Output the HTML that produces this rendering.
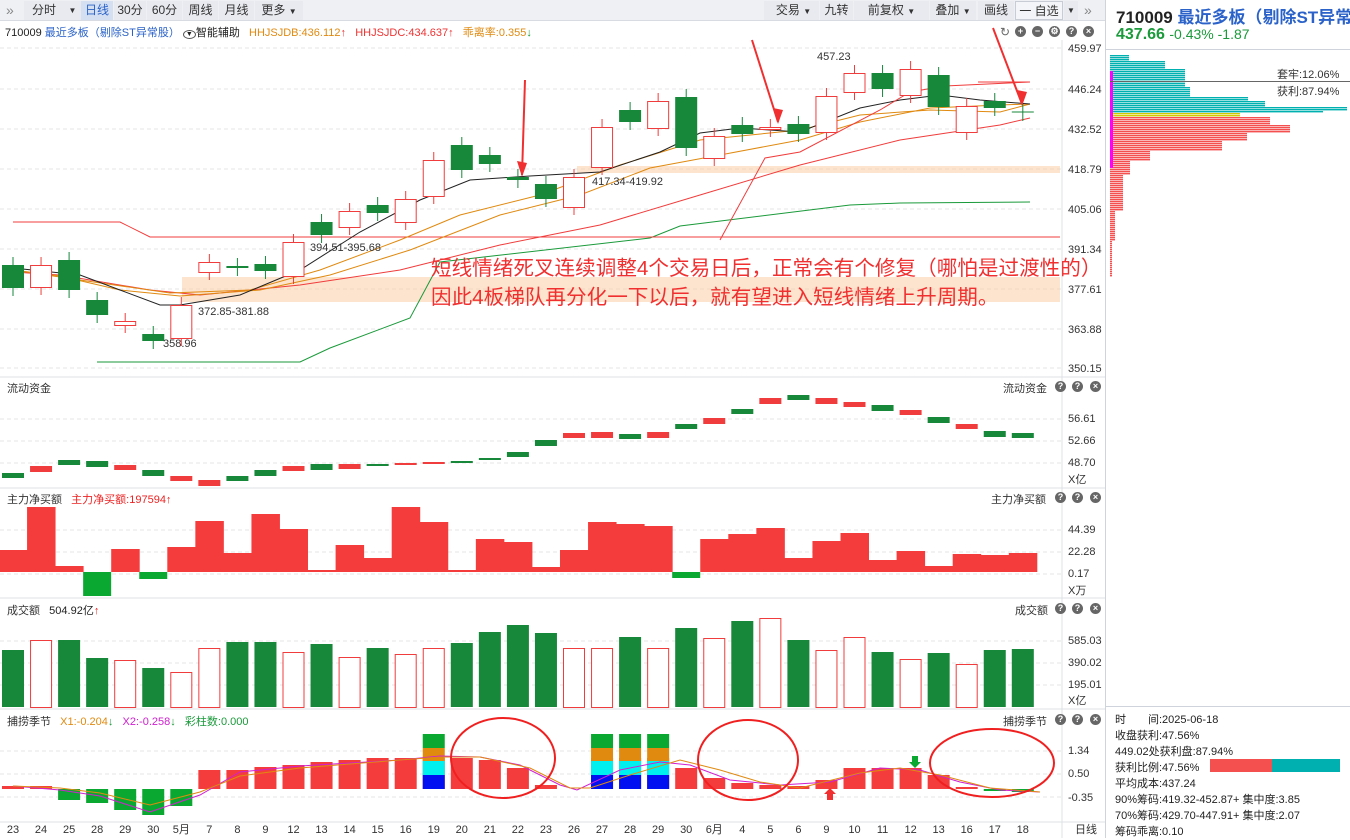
<!DOCTYPE html>
<html><head><meta charset="utf-8">
<style>
*{margin:0;padding:0;box-sizing:border-box}
body{width:1350px;height:838px;overflow:hidden;background:#fff;font-family:"Liberation Sans","Noto Sans CJK SC",sans-serif;font-size:12px;color:#333;position:relative}
.a{position:absolute;white-space:nowrap}
.tb{position:absolute;top:0;height:21px;background:#eef0f4;border-bottom:1px solid #d8dbe2}
.btn{position:absolute;top:1px;height:19px;line-height:19px;font-size:12px;color:#333;text-align:center;background:#e8eaef}
.ax{font-size:11px;color:#333}
.ic{position:absolute;width:11px;height:11px;border-radius:50%;background:#666;color:#fff;font-size:9px;line-height:11px;text-align:center;font-weight:bold}
.dt{position:absolute;width:30px;text-align:center;top:824px;font-size:11px;line-height:13px;height:13px;white-space:nowrap}
</style></head><body>
<div class="tb" style="left:0;width:1105px"></div>
<div class="a" style="left:6px;top:2px;color:#888;font-size:14px">»</div>
<div class="btn" style="left:24px;width:40px">分时</div>
<div class="btn" style="left:64px;width:17px;font-size:8px">▼</div>
<div class="btn" style="left:81px;width:32px;background:#d4e0f2;color:#2a62c9">日线</div>
<div class="btn" style="left:114px;width:32px">30分</div>
<div class="btn" style="left:147px;width:35px">60分</div>
<div class="btn" style="left:183px;width:35px">周线</div>
<div class="btn" style="left:219px;width:35px">月线</div>
<div class="btn" style="left:255px;width:48px">更多 <span style="font-size:8px">▼</span></div>
<div class="btn" style="left:764px;width:55px;padding-left:4px">交易 <span style="font-size:8px">▼</span></div>
<div class="btn" style="left:820px;width:33px">九转</div>
<div class="btn" style="left:854px;width:75px">前复权 <span style="font-size:8px">▼</span></div>
<div class="btn" style="left:930px;width:46px">叠加 <span style="font-size:8px">▼</span></div>
<div class="btn" style="left:978px;width:36px">画线</div>
<div class="btn" style="left:1015px;width:48px;background:#f4f5f8;border:1px solid #c8ccd4">一 自选</div>
<div class="btn" style="left:1064px;width:14px;font-size:8px">▼</div>
<div class="a" style="left:1084px;top:2px;color:#888;font-size:14px">»</div>

<div class="a" style="left:5px;top:24px;font-size:11px;color:#222">710009 <span style="color:#2a62c9">最近多板（剔除ST异常股）</span> <span style="border:1px solid #555;border-radius:50%;font-size:7px;padding:0 2px">▼</span>智能辅助 &nbsp; <span style="color:#e08a10">HHJSJDB:436.112<span style="color:#e33">↑</span></span> &nbsp; <span style="color:#e33">HHJSJDC:434.637↑</span> &nbsp; <span style="color:#e08a10">乖离率:0.355<span style="color:#1a9a3a">↓</span></span></div>
<div class="a" style="left:1000px;top:25px;color:#666;font-size:12px">↻</div>
<div class="ic" style="left:1015px;top:26px">+</div><div class="ic" style="left:1032px;top:26px">−</div><div class="ic" style="left:1049px;top:26px">⚙</div><div class="ic" style="left:1066px;top:26px">?</div><div class="ic" style="left:1083px;top:26px">×</div>

<svg class="a" style="left:0;top:0" width="1105" height="838" id="sv"></svg>

<div class="a ax" style="left:1068px;top:43px">459.97</div>
<div class="a ax" style="left:1068px;top:84px">446.24</div>
<div class="a ax" style="left:1068px;top:124px">432.52</div>
<div class="a ax" style="left:1068px;top:164px">418.79</div>
<div class="a ax" style="left:1068px;top:204px">405.06</div>
<div class="a ax" style="left:1068px;top:244px">391.34</div>
<div class="a ax" style="left:1068px;top:284px">377.61</div>
<div class="a ax" style="left:1068px;top:324px">363.88</div>
<div class="a ax" style="left:1068px;top:363px">350.15</div>
<div class="a ax" style="left:817px;top:51px">457.23</div>
<div class="a ax" style="left:592px;top:176px">417.34-419.92</div>
<div class="a ax" style="left:310px;top:242px">394.51-395.68</div>
<div class="a ax" style="left:198px;top:306px">372.85-381.88</div>
<div class="a ax" style="left:163px;top:338px">358.96</div>
<div class="a" style="left:431px;top:256px;font-size:20.6px;line-height:26px;color:#f03030">短线情绪死叉连续调整4个交易日后，正常会有个修复（哪怕是过渡性的）</div>
<div class="a" style="left:431px;top:285px;font-size:20.6px;line-height:26px;color:#f03030">因此4板梯队再分化一下以后，就有望进入短线情绪上升周期。</div>

<div class="a" style="left:7px;top:380px;font-size:11px">流动资金</div>
<div class="a" style="left:1003px;top:380px;font-size:11px">流动资金</div>
<div class="a ax" style="left:1068px;top:413px">56.61</div>
<div class="a ax" style="left:1068px;top:435px">52.66</div>
<div class="a ax" style="left:1068px;top:457px">48.70</div>
<div class="a ax" style="left:1068px;top:471px">X亿</div>
<div class="a" style="left:7px;top:491px;font-size:11px">主力净买额 &nbsp; <span style="color:#e22">主力净买额:197594↑</span></div>
<div class="a" style="left:991px;top:491px;font-size:11px">主力净买额</div>
<div class="a ax" style="left:1068px;top:524px">44.39</div>
<div class="a ax" style="left:1068px;top:546px">22.28</div>
<div class="a ax" style="left:1068px;top:568px">0.17</div>
<div class="a ax" style="left:1068px;top:582px">X万</div>
<div class="a" style="left:7px;top:602px;font-size:11px">成交额 &nbsp; <span style="color:#222">504.92亿</span><span style="color:#e22">↑</span></div>
<div class="a" style="left:1015px;top:602px;font-size:11px">成交额</div>
<div class="a ax" style="left:1068px;top:635px">585.03</div>
<div class="a ax" style="left:1068px;top:657px">390.02</div>
<div class="a ax" style="left:1068px;top:679px">195.01</div>
<div class="a ax" style="left:1068px;top:692px">X亿</div>
<div class="a" style="left:7px;top:713px;font-size:11px">捕捞季节 &nbsp; <span style="color:#e08a10">X1:-0.204</span><span style="color:#1a9a3a">↓</span> &nbsp; <span style="color:#d020d0">X2:-0.258</span><span style="color:#1a9a3a">↓</span> &nbsp; <span style="color:#1a9a3a">彩柱数:0.000</span></div>
<div class="a" style="left:1003px;top:713px;font-size:11px">捕捞季节</div>
<div class="a ax" style="left:1068px;top:745px">1.34</div>
<div class="a ax" style="left:1068px;top:768px">0.50</div>
<div class="a ax" style="left:1068px;top:792px">-0.35</div>
<div class="a" style="left:1075px;top:824px;font-size:11px;line-height:13px">日线</div>
<div id="dates"></div>
<div id="ics"></div>

<div class="a" style="left:1105px;top:0;width:1px;height:838px;background:#cfd3dc"></div>
<div class="a" style="left:1116px;top:3px;font-size:17px;font-weight:bold;color:#222">710009 <span style="color:#2a62c9">最近多板（剔除ST异常</span></div>
<div class="a" style="left:1116px;top:26px;font-size:16px;font-weight:bold;color:#1a9a3a">437.66 <span style="font-size:14px;font-weight:normal">-0.43% -1.87</span></div>
<div class="a" style="left:1106px;top:49px;width:244px;height:1px;background:#cfd3dc"></div>
<svg class="a" style="left:1106px;top:50px" width="244" height="240" id="chips"></svg>
<div class="a" style="left:1110px;top:81px;width:240px;height:1px;background:#666"></div>
<div class="a" style="left:1277px;top:66px;font-size:11px">套牢:12.06%</div>
<div class="a" style="left:1277px;top:83px;font-size:11px">获利:87.94%</div>
<div class="a" style="left:1106px;top:706px;width:244px;height:1px;background:#cfd3dc"></div>
<div class="a" style="left:1115px;top:712px;font-size:11px;line-height:16px;color:#222">时　　间:2025-06-18<br>收盘获利:47.56%<br>449.02处获利盘:87.94%<br>获利比例:47.56%<br>平均成本:437.24<br>90%筹码:419.32-452.87+ 集中度:3.85<br>70%筹码:429.70-447.91+ 集中度:2.07<br>筹码乖离:0.10</div>
<div class="a" style="left:1210px;top:759px;width:62px;height:13px;background:#f55050"></div>
<div class="a" style="left:1272px;top:759px;width:68px;height:13px;background:#00b0b0"></div>

<script>
var R='#f03c3c',G='#17873a',s='';
function X(i){return 13+i*28.05}
function r(x,y,w,h,f,st){s+='<rect x="'+x+'" y="'+y+'" width="'+w+'" height="'+h+'" fill="'+f+'"'+(st?' stroke="'+st+'"':'')+'/>'}
function l(x1,y1,x2,y2,c,w){s+='<line x1="'+x1+'" y1="'+y1+'" x2="'+x2+'" y2="'+y2+'" stroke="'+c+'" stroke-width="'+(w||1)+'"/>'}
function pl(p,c,w){s+='<polyline points="'+p+'" fill="none" stroke="'+c+'" stroke-width="'+(w||1)+'"/>'}
[377,488,598,709,822].forEach(function(y){l(0,y,1105,y,'#dde0e6')});
l(1062,40,1062,838,'#dde0e6');
[48,89,129,169,209,249,289,329,368,419,441,463,530,552,574,641,663,685,751,774,797].forEach(function(y){s+='<line x1="0" y1="'+y+'" x2="1062" y2="'+y+'" stroke="#e4e4e4" stroke-dasharray="4,3"/>'});
r(182,277,878,25,'rgba(252,205,165,0.55)');r(577,166,483,7,'rgba(252,205,165,0.55)');
var c=[[0,265,288],[1,265,287],[0,260,290],[0,300,315],[1,321,325],[0,334,341],[1,305,338],[1,262,272],[0,266,268],[0,264,271],[1,242,276],[0,222,235],[1,211,227],[0,205,213],[1,199,222],[1,160,196],[0,145,170],[0,155,164],[0,177,180],[0,184,199],[1,177,207],[1,127,167],[0,110,122],[1,101,128],[0,97,148],[1,136,158],[0,125,134],[1,127,129],[0,124,134],[1,96,132],[1,73,92],[0,73,89],[1,69,95],[0,75,107],[1,106,132],[0,101,108],[0,112,113]];
pl('97,362 125,362 300,362 330,348 410,318 440,262 650,238 680,226 850,205 900,203 1030,202','#1a9a3a');
pl('13,222 120,222 150,237 1060,237','#f03c3c');
pl('13,272 60,275 150,290 200,295 300,285 400,270 500,245 600,225 700,195 800,165 900,140 1000,125 1030,118','#f03c3c');
pl('13,270 60,276 120,290 180,296 260,290 330,275 410,250 500,215 580,195 650,168 720,155 800,140 860,122 930,108 1000,105 1030,104','#e08a10');
pl('13,270 80,280 170,293 250,290 320,270 400,240 460,215 540,195 620,165 700,140 800,130 860,115 930,110 1000,112 1030,104','#e08a10');
pl('13,268 80,275 120,290 160,305 180,305 240,295 300,270 360,232 420,200 470,180 530,176 600,172 660,152 700,133 740,128 800,132 860,108 900,100 940,95 980,100 1030,104','#222');
pl('720,240 765,158 800,152 880,110 910,92 945,86 1030,82','#f03c3c');
l(978,82,1030,82,'#f03c3c');
c.forEach(function(d,i){var x=X(i);var col=d[0]?R:G;l(x,d[1]-8,x,d[2]+8,col);if(d[2]-d[1]<2){l(x-11,d[1],x+11,d[1],col)}else if(d[0]){r(x-10.5,d[1]+.5,21,d[2]-d[1],'#fff',R)}else r(x-11,d[1],22,d[2]-d[1],G)});
[[525,80,522,175],[752,40,778,122],[993,28,1022,104]].forEach(function(a){l(a[0],a[1],a[2],a[3],'#f03030',2);s+='<polygon points="'+(a[2]-5)+','+(a[3]-14)+' '+(a[2]+5)+','+(a[3]-12)+' '+a[2]+','+(a[3]+2)+'" fill="#f03030"/>'});
var fl=[473,466,460,461,465,470,476,480,476,470,466,464,464,464,463,462,461,458,452,440,433,432,434,432,424,418,409,398,395,398,402,405,410,417,424,431,433];
fl.forEach(function(y,i){var x=X(i);r(x-11,y,22,i>=13&&i<=17?2:(i%2?6:5),c[i][0]?R:G)});
var mn=[550,507,566,-596,549,-579,547,521,553,514,529,570,545,558,507,522,570,539,542,567,550,522,524,526,-578,539,534,528,558,541,533,560,551,566,554,555,553];
mn.forEach(function(v,i){var x=X(i)-14;if(v<0)r(x,572,28,-v-572,'#0aa830');else r(x,v,28.5,572-v,'#f53c3c')});
var vo=[650,640,640,658,660,668,672,648,642,642,652,644,657,648,654,648,643,632,625,633,648,648,637,648,628,638,621,618,640,650,637,652,659,653,664,650,649];
vo.forEach(function(y,i){var x=X(i);if(c[i][0])r(x-10.5,y+.5,21,707-y,'#fff',R);else r(x-11,y,22,707-y,G)});
var bl=[786,786,800,803,810,815,806,770,770,767,765,762,760,758,758,758,758,760,768,785,789,758,758,758,768,778,783,785,786,780,768,768,768,775,787,791,792];
bl.forEach(function(y,i){var x=X(i);if(i>=2&&i<=6||i>=35)r(x-11,789,22,y-789,'#0aa830');else if(y<789)r(x-11,y,22,789-y,'#f53c3c')});
[15,21,22,23].forEach(function(i){var x=X(i)-11;r(x,775,22,14,'#0010f0');r(x,761,22,14,'#00f0f0');r(x,748,22,13,'#e08a10');r(x,734,22,14,'#0aa830')});
pl('13,786 60,790 100,796 150,812 200,795 240,772 300,766 400,760 440,756 480,757 520,765 560,785 577,790 620,770 660,762 690,765 730,780 780,785 830,782 880,768 920,770 960,782 1000,790 1040,792','#d020d0');
pl('13,786 60,788 100,793 150,805 200,792 240,776 300,768 400,760 440,757 480,757 530,768 570,788 590,788 630,775 680,760 720,770 760,782 800,788 860,773 900,768 940,775 990,788 1040,792','#e08a10');
s+='<ellipse cx="503" cy="758" rx="52" ry="40" fill="none" stroke="#f02020" stroke-width="2"/>';
s+='<ellipse cx="748" cy="760" rx="50" ry="40" fill="none" stroke="#f02020" stroke-width="2"/>';
s+='<ellipse cx="992" cy="763" rx="62" ry="34" fill="none" stroke="#f02020" stroke-width="2"/>';
s+='<polygon points="912,756 918,756 918,762 921,762 915,768 909,762 912,762" fill="#0aa830"/><polygon points="827,800 833,800 833,794 836,794 830,788 824,794 827,794" fill="#f03030"/>';
document.getElementById('sv').innerHTML=s;
var dl=['23','24','25','28','29','30','5月','7','8','9','12','13','14','15','16','19','20','21','22','23','26','27','28','29','30','6月','4','5','6','9','10','11','12','13','16','17','18'],h='';
dl.forEach(function(t,i){h+='<div class="dt" style="left:'+(X(i)-15)+'px">'+t+'</div>'});
document.getElementById('dates').innerHTML=h;
h='';[380,491,602,713].forEach(function(y){h+='<div class="ic" style="left:1055px;top:'+(y+1)+'px">?</div><div class="ic" style="left:1072px;top:'+(y+1)+'px">?</div><div class="ic" style="left:1090px;top:'+(y+1)+'px">×</div>'});
document.getElementById('ics').innerHTML=h;
var cs='',y;
for(y=55;y<=276;y+=2){var w,col='#00b0b0';
if(y<61)w=19;else if(y<69)w=55;else if(y<86)w=75;else if(y<96)w=80;else if(y<100)w=138;else if(y<106)w=155;else if(y<110)w=237;else if(y<113)w=213;else if(y<117){w=130;col='#d0c800'}else{col='#f55050';
if(y<124)w=160;else if(y<132)w=180;else if(y<140)w=137;else if(y<150)w=112;else if(y<160)w=40;else if(y<175)w=20;else if(y<210)w=13;else if(y<240)w=5;else w=2}
cs+='<rect x="4" y="'+(y-50)+'" width="'+w+'" height="1.4" fill="'+col+'"/>'}
cs+='<rect x="4" y="21" width="3" height="97" fill="#f0f"/>';
document.getElementById('chips').innerHTML=cs;
</script>
</body></html>
